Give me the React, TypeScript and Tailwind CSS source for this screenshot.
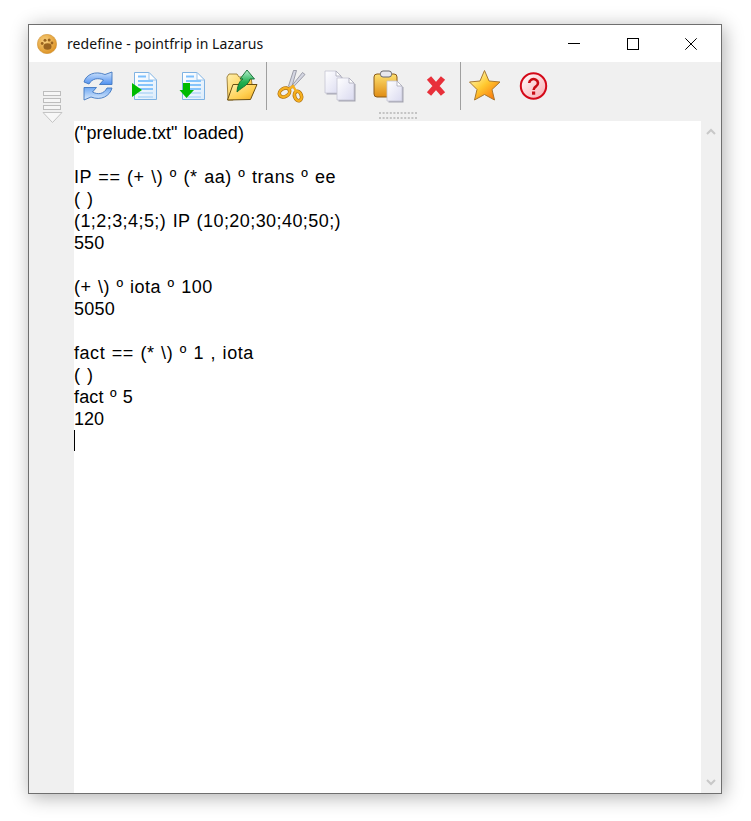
import React from "react";

const lines: [string, string][] = [
  ['("prelude.txt" loaded)', "tracking-[0.05px]"],
  ["", ""],
  ["IP == (+ \\) º (* aa) º trans º ee", "tracking-[0.55px]"],
  ["( )", "tracking-[0.5px]"],
  ["(1;2;3;4;5;) IP (10;20;30;40;50;)", "tracking-[0.43px]"],
  ["550", "tracking-[0.1px]"],
  ["", ""],
  ["(+ \\) º iota º 100", "tracking-[0.5px]"],
  ["5050", "tracking-[0.2px]"],
  ["", ""],
  ["fact == (* \\) º 1 , iota", "tracking-[0.55px]"],
  ["( )", "tracking-[0.5px]"],
  ["fact º 5", "tracking-[0.18px]"],
  ["120", ""],
];

const Icon = ({ children }: { children: React.ReactNode }) => (
  <div className="w-12 h-12 flex items-center justify-center shrink-0">
    <svg width="32" height="32" viewBox="0 0 32 32" className="overflow-visible">
      {children}
    </svg>
  </div>
);

const Page = ({ id }: { id: string }) => (
  <g>
    <path d="M4.5 2.5H19L26.5 10V29.5H4.5Z" fill={`url(#${id})`} stroke="#7fb2e2" />
    <path d="M19 2.5V10H26.5Z" fill="#fff" stroke="#9cc4ea" />
    <path d="M8 6.5h8" stroke="#7cc0ff" strokeWidth="2" />
    <path d="M8 11h15M8 15h15M8 19h15" stroke="#86c4fb" strokeWidth="2" />
    <path d="M8 23h15M8 27h15" stroke="#c0def8" strokeWidth="2" />
  </g>
);

const WhitePage = ({ x, y, w, h }: { x: number; y: number; w: number; h: number }) => (
  <g>
    <path d={`M${x + 1.5} ${y + 1.5}h${w - 5}l5 5v${h - 5}h-${w}z`} fill="#8e8e9e" opacity="0.75" />
    <path d={`M${x} ${y}h${w - 5}l5 5v${h - 5}h-${w}z`} fill="url(#pageWhite)" stroke="#c4c4d2" strokeWidth="0.8" />
    <path d={`M${x + w - 5} ${y}v5h5z`} fill="#fff" stroke="#a8a8b8" strokeWidth="0.8" />
  </g>
);

export default function App() {
  return (
    <div className="h-[821px] bg-white pt-[24px] pl-[28px] overflow-hidden">
      <svg width="0" height="0" className="absolute">
        <defs>
          <linearGradient id="docA" x1="0" y1="0" x2="1" y2="1">
            <stop offset="0" stopColor="#ffffff" />
            <stop offset="1" stopColor="#dcecfb" />
          </linearGradient>
          <linearGradient id="pageWhite" x1="0" y1="0" x2="1" y2="1">
            <stop offset="0" stopColor="#ffffff" />
            <stop offset="1" stopColor="#dadaf0" />
          </linearGradient>
          <linearGradient id="blueArrow" x1="0" y1="0" x2="0" y2="1">
            <stop offset="0" stopColor="#cfe3fb" />
            <stop offset="1" stopColor="#4f90f0" />
          </linearGradient>
          <linearGradient id="blueArrow2" x1="0" y1="0" x2="0" y2="1">
            <stop offset="0" stopColor="#6fa8f2" />
            <stop offset="1" stopColor="#dcebfc" />
          </linearGradient>
          <linearGradient id="folder" x1="0" y1="0" x2="1" y2="1">
            <stop offset="0" stopColor="#fff0b0" />
            <stop offset="0.6" stopColor="#ffcf50" />
            <stop offset="1" stopColor="#f0a820" />
          </linearGradient>
          <linearGradient id="arrowG" x1="0" y1="0" x2="0" y2="1">
            <stop offset="0" stopColor="#b8f0d0" />
            <stop offset="0.55" stopColor="#20b050" />
            <stop offset="1" stopColor="#089038" />
          </linearGradient>
          <linearGradient id="star" x1="0.2" y1="0.1" x2="0.9" y2="0.9">
            <stop offset="0" stopColor="#fff4a8" />
            <stop offset="0.45" stopColor="#ffc930" />
            <stop offset="1" stopColor="#fb7408" />
          </linearGradient>
          <linearGradient id="help" x1="0" y1="0" x2="1" y2="1">
            <stop offset="0" stopColor="#ffffff" />
            <stop offset="1" stopColor="#f8aab0" />
          </linearGradient>
          <linearGradient id="clip" x1="0" y1="0" x2="0" y2="1">
            <stop offset="0" stopColor="#fde070" />
            <stop offset="1" stopColor="#e08c14" />
          </linearGradient>
          <radialGradient id="paw" cx="0.4" cy="0.35" r="0.7">
            <stop offset="0" stopColor="#f8d080" />
            <stop offset="1" stopColor="#dc9020" />
          </radialGradient>
        </defs>
      </svg>
      <div className="w-[694px] h-[770px] border border-[#6f6f6f] bg-[#f0f0f0] flex flex-col shadow-[2px_3px_18px_rgba(0,0,0,0.32)]">
        <div className="h-[37px] bg-white flex items-center shrink-0">
          <svg width="20" height="20" viewBox="0 0 20 20" className="ml-[8px]">
            <circle cx="10" cy="10" r="9.7" fill="url(#paw)" stroke="#c98a2a" strokeWidth="0.5" />
            <ellipse cx="10.5" cy="12.5" rx="4" ry="3.2" fill="#9a6420" />
            <circle cx="5.2" cy="9.5" r="1.4" fill="#9a6420" />
            <circle cx="8" cy="6.2" r="1.5" fill="#9a6420" />
            <circle cx="12.2" cy="6" r="1.5" fill="#9a6420" />
            <circle cx="15" cy="9" r="1.4" fill="#9a6420" />
          </svg>
          <span className="ml-[10px] text-[14px] tracking-[0.07px] text-[#111] font-['Noto_Sans',sans-serif]">
            redefine - pointfrip in Lazarus
          </span>
          <div className="ml-auto flex mr-px">
            <div className="w-[58px] h-[37px] flex items-center justify-center">
              <svg width="12" height="12" viewBox="0 0 12 12"><path d="M0 5.5H12" stroke="#000" /></svg>
            </div>
            <div className="w-[59px] h-[37px] flex items-center justify-center">
              <svg width="12" height="12" viewBox="0 0 12 12"><rect x="0.5" y="0.5" width="11" height="11" fill="none" stroke="#000" /></svg>
            </div>
            <div className="w-[58px] h-[37px] flex items-center justify-center">
              <svg width="12" height="12" viewBox="0 0 12 12"><path d="M0.3 0.3L11.7 11.7M11.7 0.3L0.3 11.7" stroke="#000" /></svg>
            </div>
          </div>
        </div>

        <div className="flex-1 flex min-h-0">
          <div className="w-[45px] shrink-0 pt-[29px] pl-[13px]">
            <svg width="21" height="33" viewBox="0 0 21 33">
              <g fill="#f6f6f6" stroke="#bdbdbd">
                <rect x="1.5" y="0.5" width="17" height="4" />
                <rect x="1.5" y="7.5" width="17" height="4" />
                <rect x="1.5" y="14.5" width="17" height="4" />
              </g>
              <path d="M1 21.5H20L10.5 31.5Z" fill="#f8f8f8" stroke="#c4c4c4" />
            </svg>
          </div>
          <div className="flex-1 flex flex-col min-w-0">
            <div className="h-[59px] shrink-0 flex flex-col">
              <div className="flex h-12">
                <Icon>
                  <path d="M2 12C4 4.5 13 0.5 23 4.5L30 2V14.5H17.5L21.5 10C16 7.5 10 8.5 7 14Z" fill="url(#blueArrow)" stroke="#3f76c0" strokeWidth="0.9" />
                  <path d="M30 18C28 26 19 31 9 27L2 30V17.5H14.5L10.5 22C16 25 22 24 25 18Z" fill="url(#blueArrow2)" stroke="#3f76c0" strokeWidth="0.9" />
                </Icon>
                <Icon>
                  <Page id="docA" />
                  <path d="M2 13L12 20L2 27Z" fill="#00bb00" />
                </Icon>
                <Icon>
                  <Page id="docA" />
                  <path d="M5 13H12V20H16L8.5 28L1.5 20H5Z" fill="#00bb00" />
                </Icon>
                <Icon>
                  <path d="M1 7L3 4H11L13 7H25L26 14L7 30H2Z" fill="url(#folder)" stroke="#8a6a20" strokeWidth="0.8" />
                  <path d="M7 14.5H31L24.5 29.5L1.5 30Z" fill="url(#folder)" stroke="#6a4e10" />
                  <path d="M11 22C11.5 14 14.5 10 17 9H14L21 0L28.5 9H24C22.5 15 17 16.5 11 22Z" fill="url(#arrowG)" stroke="#0e6a30" strokeWidth="0.9" />
                </Icon>
                <div className="w-px h-12 bg-[#9f9f9f] shrink-0" />
                <Icon>
                  <path d="M16.5 19L30 4.5L27.5 2.5L15 18ZM16.5 18L21.5 0.5L18.5 0.5L13.5 16Z" fill="#d4d6e2" stroke="#7e808e" strokeWidth="0.7" />
                  <g fill="none" stroke="#a86c10" strokeWidth="3.6">
                    <ellipse cx="9.5" cy="22.5" rx="5.5" ry="4" transform="rotate(-30 9.5 22.5)" />
                    <ellipse cx="23" cy="26" rx="3.4" ry="4.8" transform="rotate(-20 23 26)" />
                  </g>
                  <g fill="none" stroke="#f6b020" strokeWidth="2.4">
                    <ellipse cx="9.5" cy="22.5" rx="5.5" ry="4" transform="rotate(-30 9.5 22.5)" />
                    <ellipse cx="23" cy="26" rx="3.4" ry="4.8" transform="rotate(-20 23 26)" />
                    <path d="M14 19L18 16L21 21" />
                  </g>
                </Icon>
                <Icon>
                  <WhitePage x={2} y={1} w={16} h={22} />
                  <WhitePage x={14} y={8} w={17} h={22} />
                </Icon>
                <Icon>
                  <rect x="3" y="4" width="23" height="23" rx="3" fill="url(#clip)" stroke="#8a5a18" />
                  <rect x="9.5" y="1" width="11" height="6" rx="2.5" fill="#e8e8ee" stroke="#6a6a70" />
                  <WhitePage x={16} y={11} w={15} h={20} />
                </Icon>
                <Icon>
                  <path d="M10 8L24 24M24 8L10 24" stroke="#e8303a" strokeWidth="5.6" />
                </Icon>
                <div className="w-px h-12 bg-[#9f9f9f] shrink-0 ml-px" />
                <Icon>
                  <path d="M15.5 0.5L20 11L31 12L23 19.5L25.5 30L15.5 24.5L5.5 30L8 19.5L0.5 12L11 11Z" fill="url(#star)" stroke="#a87830" strokeLinejoin="round" />
                </Icon>
                <Icon>
                  <circle cx="16.5" cy="16" r="12.7" fill="url(#help)" stroke="#d40818" strokeWidth="2" />
                  <path d="M12.2 13a4.4 4 0 1 1 6.8 3.4c-1.6 1.1-2.4 2-2.4 3.6" fill="none" stroke="#c80c14" strokeWidth="2.6" />
                  <rect x="15" y="21.5" width="3.2" height="3.2" fill="#c80c14" />
                </Icon>
              </div>
              <div className="flex-1 flex justify-center pt-[2px]">
                <svg width="38" height="8" viewBox="0 0 38 8">
                  {Array.from({ length: 11 }).flatMap((_, i) => [
                    <rect key={`a${i}`} x={i * 3.6} y="0" width="2" height="2" fill="#c4c4c4" />,
                    <rect key={`b${i}`} x={i * 3.6} y="5" width="2" height="2" fill="#c4c4c4" />,
                  ])}
                </svg>
              </div>
            </div>
            <div className="flex-1 flex min-h-0">
              <div className="flex-1 bg-white pt-px text-[18px] leading-[22px] text-black font-['Liberation_Sans',sans-serif] whitespace-pre [word-spacing:1px]">
                {lines.map(([l, c], i) => (
                  <div key={i} className={`h-[22px] ${c}`}>{l}</div>
                ))}
                <div className="w-px h-[21px] bg-black" />
              </div>
              <div className="w-[20px] shrink-0 flex flex-col justify-between items-center py-[7px]">
                <svg width="10" height="7" viewBox="0 0 10 7"><path d="M1 6L5 2L9 6" fill="none" stroke="#c8c8c8" strokeWidth="2" /></svg>
                <svg width="10" height="7" viewBox="0 0 10 7"><path d="M1 1L5 5L9 1" fill="none" stroke="#c8c8c8" strokeWidth="2" /></svg>
              </div>
            </div>
          </div>
        </div>
      </div>
    </div>
  );
}
